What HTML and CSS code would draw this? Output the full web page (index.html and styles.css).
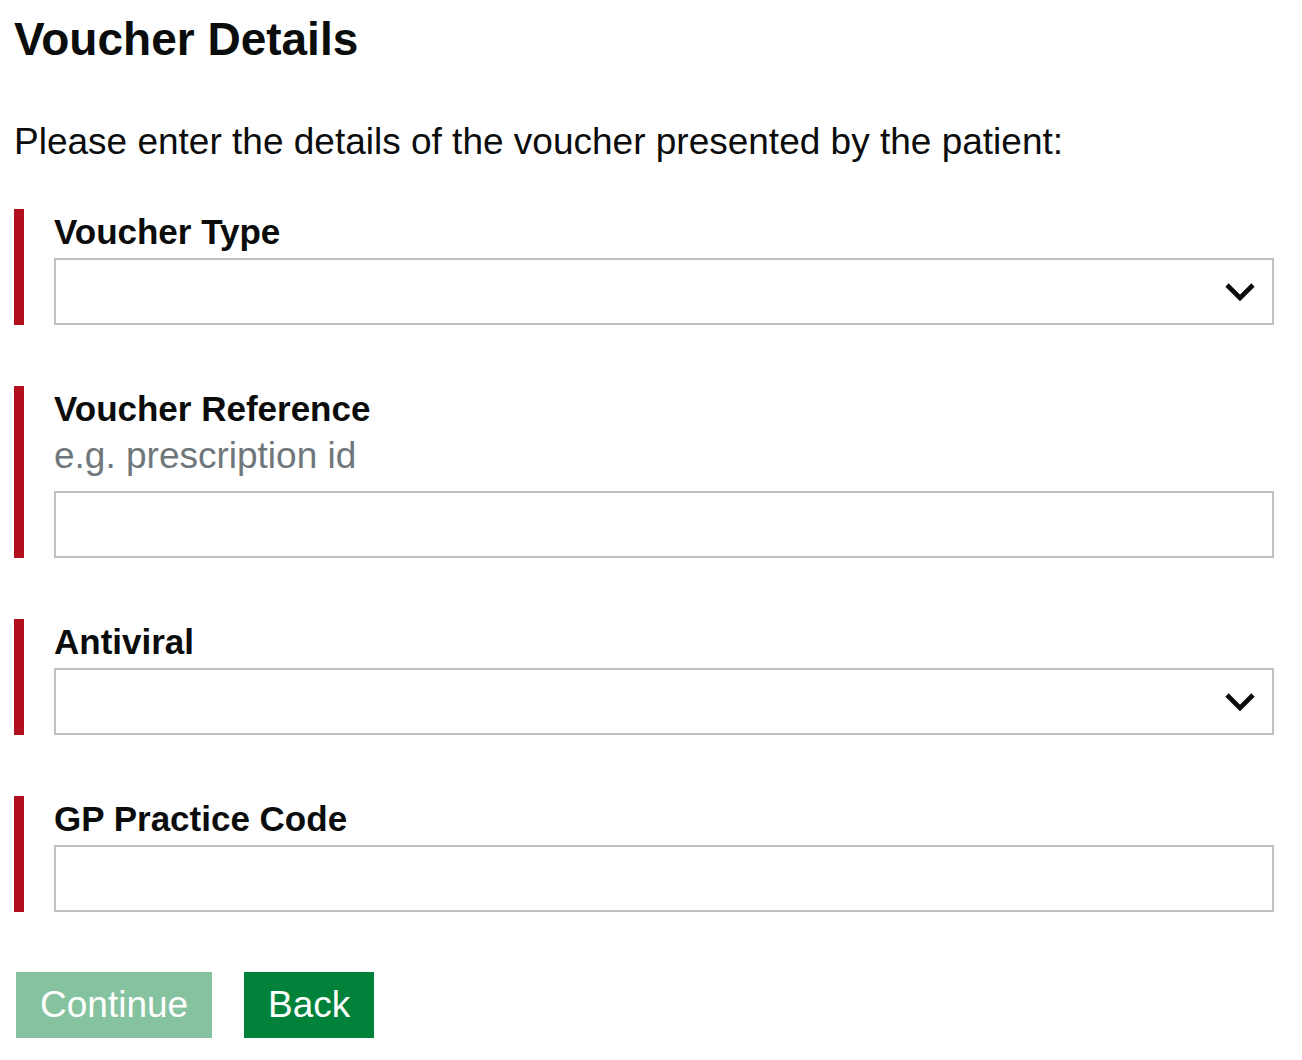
FILE: index.html
```html
<!DOCTYPE html>
<html lang="en">
<head>
<meta charset="utf-8">
<title>Voucher Details</title>
<link rel="stylesheet" href="styles.css">
</head>
<body>
<main class="page">
  <h1 class="title">Voucher Details</h1>
  <p class="lead">Please enter the details of the voucher presented by the patient:</p>
  <form class="form">
    <div class="group">
      <label class="label" for="vtype">Voucher Type</label>
      <div class="select-wrap">
        <select class="control select" id="vtype"><option></option></select>
        <svg class="chevron" width="32" height="20" viewBox="0 0 32 20" aria-hidden="true"><polyline points="3,3 16,16 29,3" fill="none" stroke="#0b0c0c" stroke-width="4.6"/></svg>
      </div>
    </div>
    <div class="group">
      <label class="label" for="vref">Voucher Reference</label>
      <div class="hint">e.g. prescription id</div>
      <input class="control" id="vref" type="text">
    </div>
    <div class="group">
      <label class="label" for="antiviral">Antiviral</label>
      <div class="select-wrap">
        <select class="control select" id="antiviral"><option></option></select>
        <svg class="chevron" width="32" height="20" viewBox="0 0 32 20" aria-hidden="true"><polyline points="3,3 16,16 29,3" fill="none" stroke="#0b0c0c" stroke-width="4.6"/></svg>
      </div>
    </div>
    <div class="group group-last">
      <label class="label" for="gp">GP Practice Code</label>
      <input class="control" id="gp" type="text">
    </div>
    <div class="actions">
      <button type="button" class="btn btn-disabled">Continue</button>
      <button type="button" class="btn btn-primary">Back</button>
    </div>
  </form>
</main>
</body>
</html>
```
FILE: styles.css
```css
html, body {
  margin: 0;
  padding: 0;
  background: #ffffff;
}

body {
  font-family: "Liberation Sans", Arial, sans-serif;
  color: #0b0c0c;
}

.page {
  padding: 0 14px;
  width: 1260px;
}

.title {
  margin: 0;
  padding-top: 14px;
  font-size: 46px;
  line-height: 50px;
  font-weight: bold;
}

.lead {
  margin: 56px 0 0;
  font-size: 37px;
  line-height: 44px;
}

.form {
  margin-top: 45px;
  display: flex;
  flex-direction: column;
}

.group {
  border-left: 10px solid #b10e1e;
  padding: 3px 0 0 30px;
  margin-bottom: 61px;
  display: flex;
  flex-direction: column;
}

.group-last {
  margin-bottom: 60px;
}

.label {
  display: block;
  font-size: 35px;
  line-height: 40px;
  font-weight: bold;
  margin-bottom: 6px;
}

.hint {
  font-size: 37px;
  line-height: 44px;
  color: #6f777b;
  margin-top: -1px;
  margin-bottom: 13px;
}

.control {
  box-sizing: border-box;
  display: block;
  width: 100%;
  height: 67px;
  margin: 0;
  border: 2px solid #bfc1c3;
  border-radius: 0;
  background: #ffffff;
  font-family: inherit;
  font-size: 37px;
  padding: 0 10px;
  color: #0b0c0c;
}

.select {
  -webkit-appearance: none;
  appearance: none;
}

.select-wrap {
  position: relative;
}

.chevron {
  position: absolute;
  right: 18px;
  top: 24px;
  pointer-events: none;
}

.actions {
  display: flex;
  gap: 32px;
  padding-left: 2px;
}

.btn {
  font-family: inherit;
  font-size: 37px;
  line-height: 66px;
  height: 66px;
  padding: 0 24px;
  border: 0;
  border-radius: 0;
  color: #ffffff;
  cursor: pointer;
}

.btn-disabled {
  background: #85c3a0;
  box-shadow: 0 4px 0 #82a08d;
}

.btn-primary {
  background: #00823b;
  box-shadow: 0 4px 0 #003618;
}
```
